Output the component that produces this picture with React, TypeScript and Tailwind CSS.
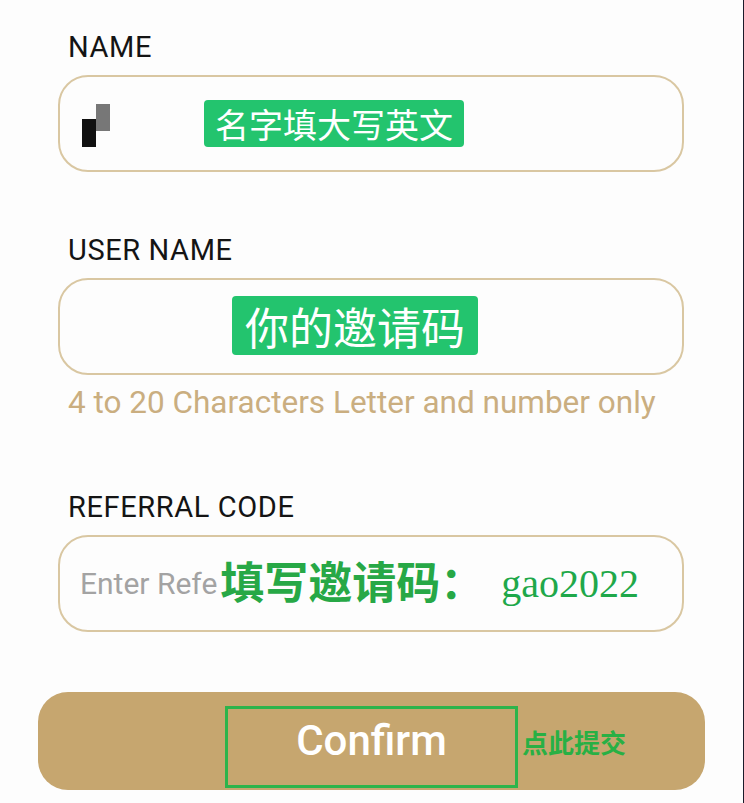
import React from 'react';

const font = { fontFamily: 'Roboto, "Noto Sans CJK SC", sans-serif' };

const Label: React.FC<{ text: string; className?: string }> = ({ text, className }) => (
    <div className={`ml-[68px] text-[29px] leading-[32px] tracking-[0.6px] text-[#141414] ${className ?? ''}`}>{text}</div>
);

const Tag: React.FC<{ text: string; className: string }> = ({ text, className }) => (
    <div
        className={`bg-[#23c46e] text-white rounded-[4px] flex items-center ${className}`}
        style={{ fontFamily: '"Noto Sans CJK SC", sans-serif' }}
    >
        {text}
    </div>
);

export default function App() {
    return (
        <div className="w-[744px] h-[803px] bg-[#fdfdfd] border-r border-[#1b1b2a] overflow-hidden" style={font}>
            <div className="flex flex-col pt-[31px]">
                <Label text="NAME" />
                <div className="ml-[58px] mt-[12px] w-[626px] h-[97px] rounded-[30px] border-2 border-[#d9c7a2] flex items-center pl-[22px]">
                    <div className="flex h-[43px] w-[28px] mt-[3px]">
                        <div className="w-[14px] h-[28px] bg-[#111] self-end" />
                        <div className="w-[14px] h-[27px] bg-[#777] self-start" />
                    </div>
                    <Tag text="名字填大写英文" className="ml-[94px] h-[47px] px-[11px] text-[34px] leading-none" />
                </div>

                <Label text="USER NAME" className="mt-[62px]" />
                <div className="ml-[58px] mt-[12px] w-[626px] h-[97px] rounded-[30px] border-2 border-[#d9c7a2] flex items-center pl-[172px]">
                    <Tag text="你的邀请码" className="h-[59px] px-[13px] text-[44px] leading-none mt-[-2px]" />
                </div>
                <div className="ml-[68px] mt-[10px] text-[31.5px] leading-[36px] text-[#caae80]">
                    4 to 20 Characters Letter and number only
                </div>

                <Label text="REFERRAL CODE" className="mt-[70px]" />
                <div className="ml-[58px] mt-[12px] w-[626px] h-[97px] rounded-[30px] border-2 border-[#d9c7a2] flex items-center pl-[20px]">
                    <span className="text-[30px] text-[#a3a3a3]">Enter Refe</span>
                    <span className="ml-[3px] text-[44px] font-bold text-[#27a846] leading-none">填写邀请码：</span>
                    <span
                        className="ml-[17px] text-[40px] text-[#1fa84a] leading-none"
                        style={{ fontFamily: '"Liberation Serif", serif' }}
                    >
                        gao2022
                    </span>
                </div>

                <div className="ml-[38px] mt-[60px] w-[667px] h-[98px] rounded-[30px] bg-[#c6a66f] flex items-center justify-center">
                    <div className="relative w-[293px] h-[82px] mt-[12px] border-[3px] border-[#2db44b] flex items-center justify-center">
                        <span className="text-[42px] font-medium text-white mt-[-14px]">Confirm</span>
                        <span className="absolute left-full ml-[7px] top-[16px] text-[26px] font-bold text-[#28b044] whitespace-nowrap">
                            点此提交
                        </span>
                    </div>
                </div>
            </div>
        </div>
    );
}
